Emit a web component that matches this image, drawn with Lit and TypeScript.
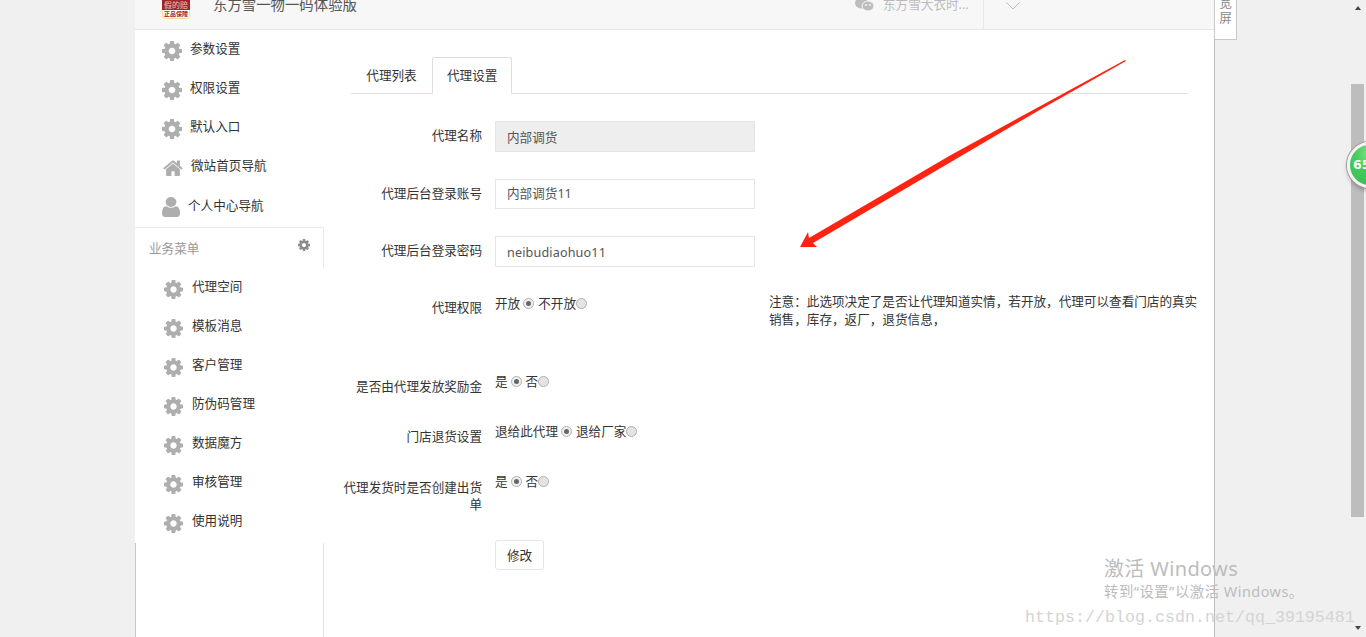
import { LitElement, html, css, svg } from "lit";
import { customElement } from "lit/decorators.js";

const COG = "M1024 640q0-106-75-181t-181-75-181 75-75 181 75 181 181 75 181-75 75-181zm512-109v222q0 12-8 23t-20 13l-185 28q-19 54-39 91 35 50 107 138 10 12 10 25t-9 23q-27 37-99 108t-94 71q-12 0-26-9l-138-108q-44 23-91 38-16 136-29 186-7 28-36 28h-222q-14 0-24.5-8.5t-11.5-21.5l-28-184q-49-16-90-37l-141 107q-10 9-25 9-14 0-25-11-126-114-165-168-7-10-7-23 0-12 8-23 15-21 51-66.5t54-70.5q-27-50-41-99l-183-27q-13-2-21-12.5t-8-23.5v-222q0-12 8-23t19-13l186-28q14-46 39-92-40-57-107-138-10-12-10-24 0-10 9-23 26-36 98.5-107.5t94.5-71.5q13 0 26 10l138 107q44-23 91-38 16-136 29-186 7-28 36-28h222q14 0 24.5 8.5t11.5 21.5l28 184q49 16 90 37l142-107q9-9 24-9 13 0 25 10 129 119 165 170 7 8 7 22 0 12-8 23-15 21-51 66.5t-54 70.5q26 50 41 98l183 28q13 2 21 12.5t8 23.5z";
const HOME = "M1472 992v480q0 26-19 45t-45 19h-384v-384h-256v384h-384q-26 0-45-19t-19-45v-480q0-1 .5-3t.5-3l575-474 575 474q1 2 1 6zm223-69l-62 74q-8 9-21 11h-3q-13 0-21-7l-692-577-692 577q-12 8-24 7-13-2-21-11l-62-74q-8-10-7-23.5t11-21.5l719-599q32-26 76-26t76 26l244 204v-195q0-14 9-23t23-9h192q14 0 23 9t9 23v408l219 182q10 8 11 21.5t-7 23.5z";
const USER = "M1536 1399q0 109-62.5 187t-150.5 78h-854q-88 0-150.5-78t-62.5-187q0-85 8.5-160.5t31.5-152 58.5-131 94-89 134.5-34.5q131 128 313 128t313-128q76 0 134.5 34.5t94 89 58.5 131 31.5 152 8.5 160.5zm-256-887q0 159-112.5 271.5t-271.5 112.5-271.5-112.5-112.5-271.5 112.5-271.5 271.5-112.5 271.5 112.5 112.5 271.5z";

const cog = (cls = "ic") => html`<svg class=${cls} viewBox="0 -128 1536 1536"><path d=${COG}></path></svg>`;
const home = () => html`<svg class="ic" viewBox="96 128 1600 1500"><path d=${HOME}></path></svg>`;
const user = () => html`<svg class="ic" viewBox="256 128 1280 1536" preserveAspectRatio="none"><path d=${USER}></path></svg>`;

@customElement("app-root")
export class AppRoot extends LitElement {
  static styles = css`
    :host {
      display: block;
      position: relative;
      width: 1366px;
      height: 637px;
      overflow: hidden;
      background: #f0f0f0;
      color: #333;
      font: 12.6px/17px "Noto Sans", "Noto Sans CJK SC", sans-serif;
    }
    .page { display: flex; height: 100%; padding-left: 135px; padding-right: 151px; box-sizing: border-box; }
    .shell {
      width: 1080px; display: flex; flex-direction: column; background: #fff;
      border-right: 1px solid #bdbdbd; box-sizing: border-box;
    }
    .header {
      height: 30px; flex: none; box-sizing: border-box; background: #f7f7f7;
      border-bottom: 1px solid #e5e5e5; overflow: hidden; display: flex; padding-left: 27px;
    }
    .hleft { display: flex; align-items: center; height: 50px; margin-top: -21px; flex: 1; }
    .logo {
      width: 28px; height: 40px; align-self: flex-start; flex: none; display: flex; flex-direction: column;
      border-radius: 0 0 4px 4px; overflow: hidden; box-sizing: border-box;
    }
    .logo-top { height: 31px; flex: none; box-sizing: border-box; padding-bottom: 1px; background: #a3232b; color: #e9c9a8; font-size: 8px; line-height: 9px; text-align: center; display: flex; align-items: flex-end; justify-content: center; white-space: nowrap; }
    .logo-bot { height: 9px; flex: none; box-sizing: border-box; background: #fff; border: 1px solid #f3dc9c; border-top: 0; border-radius: 0 0 4px 4px; color: #a3232b; font-size: 6px; line-height: 8px; text-align: center; font-weight: 700; white-space: nowrap; overflow: hidden; }
    .title { margin-left: 23px; font-size: 14.4px; color: #555; }
    .wx { margin-left: auto; width: 19px; height: 14px; flex: none; }
    .shop { margin-left: 9px; color: #bbb; width: 100px; white-space: nowrap; }
    .divider { width: 1px; align-self: stretch; background: #e8e8e8; flex: none; }
    .chev { margin-left: 22px; margin-right: 194px; width: 14px; height: 8px; flex: none; margin-top: 4px; }

    .body { flex: 1; display: flex; min-height: 0; }
    .side { width: 189px; flex: none; display: flex; flex-direction: column; }
    .item { height: 39px; display: flex; align-items: center; color: #333; white-space: nowrap; box-sizing: border-box; }
    .item span { position: relative; top: -1px; }
    .item.u span { top: 0; }
    .ic { fill: #aeaeae; flex: none; display: block; margin-top: 3px; }
    .g1 { padding-left: 27px; } .g1 .ic { width: 20px; height: 20px; margin-right: 8px; }
    .g2 { padding-left: 29px; } .g2 .ic { width: 19px; height: 19px; margin-right: 9px; }
    .h { padding-left: 28px; } .h .ic { width: 20px; height: 18px; margin-right: 8px; }
    .u { padding-left: 27px; } .u .ic { width: 18px; height: 20px; margin-right: 8px; }
    .gap2 { height: 2px; flex: none; }
    .sec {
      height: 41px; flex: none; box-sizing: border-box; border-top: 1px solid #e8e8e8; border-right: 1px solid #ececec;
      padding-left: 14px; padding-right: 13px; display: flex; align-items: center; justify-content: space-between; color: #999;
    }
    .sec svg { width: 12px; height: 12px; fill: #8c8c8c; display: block; margin-top: -6px; }
    .rest { flex: 1; border-left: 1px solid #c8c8c8; border-right: 1px solid #e5e5e5; }

    .main { flex: 1; padding: 27px 0 0 27px; min-width: 0; }
    .tabs { width: 836px; height: 37px; box-sizing: border-box; display: flex; border-bottom: 1px solid #ddd; }
    .tab { height: 37px; box-sizing: border-box; padding: 0 14.3px; display: flex; align-items: center; border: 1px solid transparent; border-radius: 3px 3px 0 0; }
    .tab.on { background: #fff; border-color: #ddd #ddd #fff; padding: 0 14px; }

    .form { margin-top: 27px; }
    .row { display: grid; grid-template-columns: 146px 260px 1fr; column-gap: 13px; margin-left: -15px; align-items: start; }
    .r58 { height: 58px; } .r57 { height: 57px; } .r78 { height: 78px; }
    .r51 { height: 50px; } .r50 { height: 51px; } .r67 { height: 67px; }
    .lab { text-align: right; padding-top: 6px; }
    .lab.up { padding-top: 5px; }
    input {
      display: block; width: 260px; height: 31px; box-sizing: border-box; border: 1px solid #e5e5e5; padding: 0 11px;
      font: inherit; color: #555; background: #fff; outline: none; border-radius: 0; margin: 0;
    }
    input.h30 { height: 30px; padding-bottom: 3px; }
    input.dis { background: #eee; }
    input.pw { letter-spacing: .15px; padding-top: 2px; }
    .opts { display: flex; align-items: center; height: 17px; white-space: nowrap; margin-top: 1px; }
    .opts.hi { margin-top: 0; }
    .radio { width: 11px; height: 11px; box-sizing: border-box; border-radius: 50%; background: #e4e4e4; border: 1px solid #b0b0b0; flex: none; position: relative; }
    .radio.c { margin: 0 4px 0 3px; background: #f0f0f0; }
    .radio.c::after { content: ""; position: absolute; left: 2px; top: 2px; width: 5px; height: 5px; border-radius: 50%; background: #666; }
    .note { margin-left: 1px; width: 432px; line-height: 18px; margin-top: -1px; }
    .btn {
      grid-column: 2; justify-self: start; width: 49px; height: 30px; box-sizing: border-box; border: 1px solid #e5e5e5; border-radius: 3px;
      background: #fff; color: #333; font: inherit; padding: 0;
    }

    .over { position: absolute; left: 0; top: 0; pointer-events: none; }
    .wide {
      position: absolute; left: 1214px; top: -6px; width: 23px; height: 46px; box-sizing: border-box; background: #fff;
      border: 1px solid #c8c8c8; color: #8a8a8a; font-size: 12.6px; line-height: 15px; text-align: center;
    }
    .sb-up, .sb-down { position: absolute; left: 1355px; width: 0; height: 0; border-left: 3.5px solid transparent; border-right: 3.5px solid transparent; }
    .sb-up { top: 6px; border-bottom: 4px solid #444; }
    .sb-down { top: 626px; border-top: 4px solid #444; }
    .thumb { position: absolute; left: 1351px; top: 84px; width: 13px; height: 433px; background: #bdbdbd; }
    .ball {
      position: absolute; left: 1347px; top: 142px; width: 46px; height: 46px; box-sizing: border-box; border-radius: 50%;
      background: radial-gradient(circle at 50% 20%, #7fe58a 0%, #45cc5c 40%, #3abb52 100%);
      border: 3px solid #f4f4f4; box-shadow: 0 0 0 1px #9a9a9a, 0 3px 4px rgba(0,0,0,.25);
      color: #fff; font: 700 12.5px/40px "DejaVu Sans", sans-serif; padding-left: 3px;
    }
    .wm { position: absolute; white-space: nowrap; pointer-events: none; }
    .w1 { left: 1104px; top: 555px; font-size: 20px; line-height: 27px; color: #bcbcbc; letter-spacing: .35px; }
    .w2 { left: 1104px; top: 582px; font-size: 14.4px; line-height: 20px; color: #bcbcbc; letter-spacing: .5px; }
    .w3 { left: 1025px; top: 608px; font: 16.67px/20px "Liberation Mono", monospace; color: #d4d4d4; }
  `;

  render() {
    const first = ["参数设置", "权限设置", "默认入口"];
    const biz = ["代理空间", "模板消息", "客户管理", "防伪码管理", "数据魔方", "审核管理", "使用说明"];
    return html`
      <div class="page">
        <div class="shell">
          <div class="header">
            <div class="hleft">
              <div class="logo">
                <div class="logo-top">假的赔</div>
                <div class="logo-bot">正品保障</div>
              </div>
              <div class="title">东方雪一物一码体验版</div>
              <svg class="wx" viewBox="0 0 19 14">
                <ellipse cx="6.5" cy="6" rx="6.5" ry="5.5" fill="#bdbdbd"></ellipse>
                <ellipse cx="13" cy="9" rx="6" ry="5" fill="#bdbdbd" stroke="#f7f7f7" stroke-width="1"></ellipse>
                <circle cx="11" cy="8" r="1" fill="#f7f7f7"></circle>
                <circle cx="15" cy="8" r="1" fill="#f7f7f7"></circle>
              </svg>
              <div class="shop">东方雪大衣时...</div>
              <div class="divider"></div>
              <svg class="chev" viewBox="0 0 14 8"><path d="M.5.5L7 7 13.5.5" fill="none" stroke="#bbb" stroke-width="1"></path></svg>
            </div>
          </div>
          <div class="body">
            <div class="side">
              ${first.map((t) => html`<div class="item g1">${cog()}<span>${t}</span></div>`)}
              <div class="item h">${home()}<span>微站首页导航</span></div>
              <div class="item u">${user()}<span>个人中心导航</span></div>
              <div class="gap2"></div>
              <div class="sec"><span>业务菜单</span>${cog("")}</div>
              ${biz.map((t) => html`<div class="item g2">${cog()}<span>${t}</span></div>`)}
              <div class="gap2"></div>
              <div class="rest"></div>
            </div>
            <div class="main">
              <div class="tabs">
                <div class="tab">代理列表</div>
                <div class="tab on">代理设置</div>
              </div>
              <div class="form">
                <div class="row r58"><div class="lab">代理名称</div><input class="dis" readonly .value=${"内部调货"} /></div>
                <div class="row r57"><div class="lab">代理后台登录账号</div><input class="h30" readonly .value=${"内部调货11"} /></div>
                <div class="row r58"><div class="lab">代理后台登录密码</div><input class="pw" readonly .value=${"neibudiaohuo11"} /></div>
                <div class="row r78">
                  <div class="lab up">代理权限</div>
                  <div class="opts">开放<i class="radio c"></i>不开放<i class="radio"></i></div>
                  <div class="note">注意：此选项决定了是否让代理知道实情，若开放，代理可以查看门店的真实销售，库存，返厂，退货信息，</div>
                </div>
                <div class="row r51"><div class="lab">是否由代理发放奖励金</div><div class="opts">是<i class="radio c"></i>否<i class="radio"></i></div></div>
                <div class="row r50"><div class="lab">门店退货设置</div><div class="opts">退给此代理<i class="radio c"></i>退给厂家<i class="radio"></i></div></div>
                <div class="row r67"><div class="lab">代理发货时是否创建出货单</div><div class="opts hi">是<i class="radio c"></i>否<i class="radio"></i></div></div>
                <div class="row"><button class="btn">修改</button></div>
              </div>
            </div>
          </div>
        </div>
      </div>
      <div class="wide">宽<br />屏</div>
      <div class="thumb"></div>
      <div class="sb-up"></div>
      <div class="sb-down"></div>
      <div class="ball">65</div>
      <svg class="over" width="1366" height="637" viewBox="0 0 1366 637">
        ${svg`<polygon points="800,247 808,232 809,238 950,155.5 1040,106.2 1125,60 1126,61 1040,109.7 950,162.5 813,243 817,247" fill="#ff2412"></polygon>`}
      </svg>
      <div class="wm w1">激活 Windows</div>
      <div class="wm w2">转到“设置”以激活 Windows。</div>
      <div class="wm w3">https://blog.csdn.net/qq_39195481</div>
    `;
  }
}
